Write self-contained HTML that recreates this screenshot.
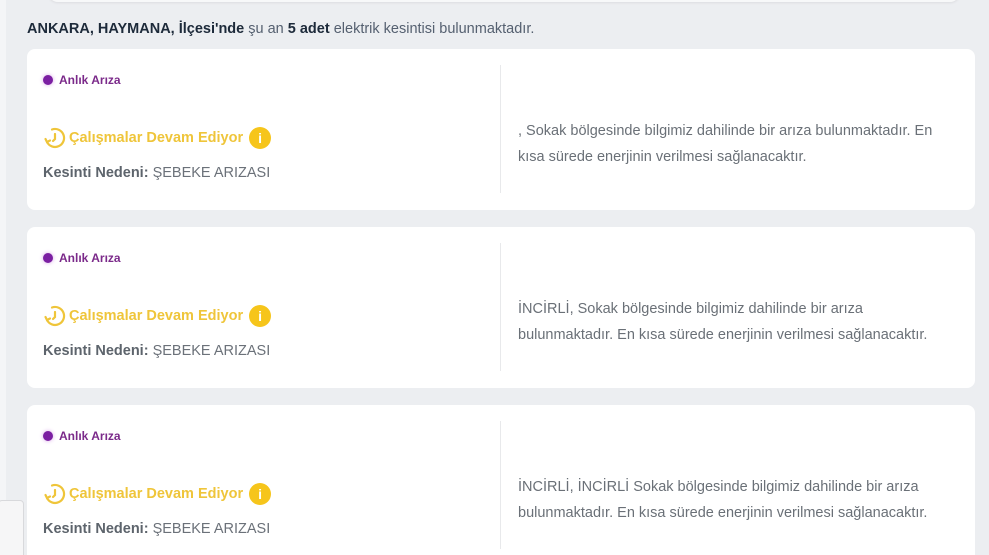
<!DOCTYPE html><html><head><meta charset="utf-8"><style>
html,body{margin:0;width:989px;height:555px;overflow:hidden}
body{background:#eceef1;font-family:"Liberation Sans",sans-serif;position:relative}
.strip{position:absolute;left:0;top:0;width:6px;height:555px;background:#f4f5f7}
.top{position:absolute;left:48px;top:-20px;width:912px;height:22px;background:#f7f8f9;border-radius:10px;box-shadow:0 1px 2px #dcdde0}
.hd{position:absolute;left:27px;top:21px;font-size:14.5px;color:#556070}
.hd b{color:#1d2a3a}
.card{position:absolute;left:27px;width:948px;height:161px;background:#fff;border-radius:8px}
.dot{position:absolute;left:16px;top:26px;width:10px;height:10px;border-radius:50%;background:#7b1fa2;box-shadow:0 0 4px #d9a6e8}
.an{position:absolute;left:32px;top:24px;font-size:12px;font-weight:bold;color:#7b2a8a}
.st{position:absolute;left:16px;top:77px;font-size:14.5px;font-weight:bold;color:#efc53a;display:flex;align-items:center}
.st svg{margin-right:2px}
.info{display:inline-block;width:22px;height:22px;border-radius:50%;background:#f6c51b;color:#fff;font-size:14px;text-align:center;line-height:22px;margin-left:6px}
.kn{position:absolute;left:16px;top:116px;font-size:14.5px;color:#6b7179}
.kn b{color:#5d646c}
.dv{position:absolute;left:473px;top:16px;width:1px;height:128px;background:#e8e9eb}
.tx{position:absolute;left:491px;top:69px;width:440px;font-size:14.5px;line-height:26px;color:#6a7077}
.corner{position:absolute;left:-2px;top:500px;width:24px;height:60px;border:1px solid #d8d9dc;background:#f6f6f7;border-radius:4px}
</style></head><body>
<div class="strip"></div><div class="top"></div>
<div class="hd"><b>ANKARA, HAYMANA, İlçesi'nde</b> şu an <b>5 adet</b> elektrik kesintisi bulunmaktadır.</div>
<div class="card" style="top:49px"><div class="dot"></div><div class="an">Anlık Arıza</div>
<div class="st"><svg width="24" height="24" viewBox="0 0 24 24" fill="none" stroke="#efc53a" stroke-width="2.2" stroke-linecap="round"><path d="M9 3.5A9 9 0 1 1 4 16"/><path d="M12 8v5l-2 2"/><path d="M2.5 13l1.5 3 3-1.5"/></svg>Çalışmalar Devam Ediyor<span class="info">i</span></div>
<div class="kn"><b>Kesinti Nedeni:</b> ŞEBEKE ARIZASI</div><div class="dv"></div>
<div class="tx">, Sokak bölgesinde bilgimiz dahilinde bir arıza bulunmaktadır. En kısa sürede enerjinin verilmesi sağlanacaktır.</div></div>
<div class="card" style="top:227px"><div class="dot"></div><div class="an">Anlık Arıza</div>
<div class="st"><svg width="24" height="24" viewBox="0 0 24 24" fill="none" stroke="#efc53a" stroke-width="2.2" stroke-linecap="round"><path d="M9 3.5A9 9 0 1 1 4 16"/><path d="M12 8v5l-2 2"/><path d="M2.5 13l1.5 3 3-1.5"/></svg>Çalışmalar Devam Ediyor<span class="info">i</span></div>
<div class="kn"><b>Kesinti Nedeni:</b> ŞEBEKE ARIZASI</div><div class="dv"></div>
<div class="tx">İNCİRLİ, Sokak bölgesinde bilgimiz dahilinde bir arıza bulunmaktadır. En kısa sürede enerjinin verilmesi sağlanacaktır.</div></div>
<div class="card" style="top:405px"><div class="dot"></div><div class="an">Anlık Arıza</div>
<div class="st"><svg width="24" height="24" viewBox="0 0 24 24" fill="none" stroke="#efc53a" stroke-width="2.2" stroke-linecap="round"><path d="M9 3.5A9 9 0 1 1 4 16"/><path d="M12 8v5l-2 2"/><path d="M2.5 13l1.5 3 3-1.5"/></svg>Çalışmalar Devam Ediyor<span class="info">i</span></div>
<div class="kn"><b>Kesinti Nedeni:</b> ŞEBEKE ARIZASI</div><div class="dv"></div>
<div class="tx">İNCİRLİ, İNCİRLİ Sokak bölgesinde bilgimiz dahilinde bir arıza bulunmaktadır. En kısa sürede enerjinin verilmesi sağlanacaktır.</div></div>
<div class="corner"></div>
</body></html>
